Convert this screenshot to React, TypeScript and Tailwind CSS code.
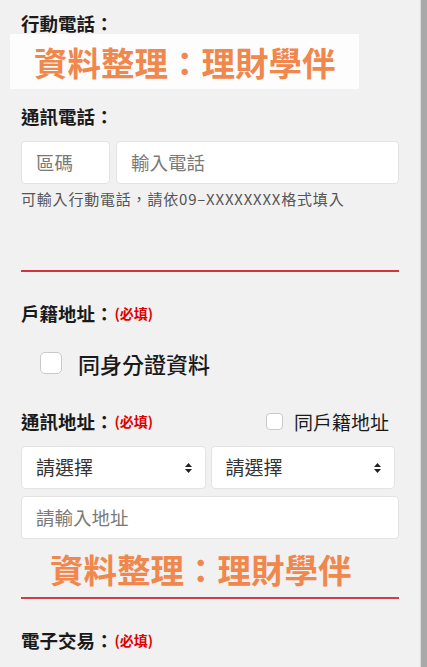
import React from "react";

const font = { fontFamily: '"Noto Sans CJK TC", "Noto Sans", sans-serif' };

function Label({ text, required }: { text: string; required?: boolean }) {
  return (
    <div className="flex items-center h-[24px] text-[18.5px] font-semibold text-[#1a1a1a] leading-none">
      <span>{text}</span>
      {required && <span className="text-[14px] font-bold text-[#e00000] ml-[1px]">(必填)</span>}
    </div>
  );
}

function Arrows() {
  return (
    <svg width="9" height="12" viewBox="0 0 9 12" className="text-[#222]">
      <path d="M4.5 1 L8 5 H1 Z" fill="currentColor" />
      <path d="M4.5 11 L8 7 H1 Z" fill="currentColor" />
    </svg>
  );
}

export default function App() {
  return (
    <div className="w-[427px] h-[667px] overflow-hidden bg-[#f1f1f1] flex" style={font}>
      <div className="flex-1 pl-[21px] pr-[21px] pt-[11px] flex flex-col">
        <Label text="行動電話：" />
        <div className="mt-[-1px] ml-[-11px] w-[349px] h-[55px] bg-[#fdfdfd] flex items-center pl-[24px]">
          <span className="text-[33.5px] font-bold text-[#f0874c] leading-none">資料整理：理財學伴</span>
        </div>
        <div className="mt-[15px]">
          <Label text="通訊電話：" />
        </div>
        <div className="mt-[13px] flex gap-[6px]">
          <div className="w-[89px] h-[43px] bg-white border border-[#e3e3e3] rounded-[4px] flex items-center pl-[14px] text-[18.5px] text-[#7a7a7a]">
            區碼
          </div>
          <div className="flex-1 h-[43px] bg-white border border-[#e3e3e3] rounded-[4px] flex items-center pl-[14px] text-[18.5px] text-[#7a7a7a]">
            輸入電話
          </div>
        </div>
        <div className="mt-[5px] text-[15px] tracking-[0.8px] text-[#555] leading-[20px] whitespace-nowrap">可輸入行動電話，請依09–XXXXXXXX格式填入</div>
        <div className="mt-[61px] h-[2px] bg-[#d8323c]" />
        <div className="mt-[29px]">
          <Label text="戶籍地址：" required />
        </div>
        <div className="mt-[23px] ml-[19px] flex items-center h-[30px]">
          <div className="w-[22px] h-[22px] bg-white border border-[#c9c9c9] rounded-[5px]" />
          <span className="ml-[16px] text-[22px] font-medium text-[#1a1a1a] leading-none">同身分證資料</span>
        </div>
        <div className="mt-[31px] flex items-center justify-between">
          <Label text="通訊地址：" required />
          <div className="flex items-center mr-[10px]">
            <div className="w-[17px] h-[17px] bg-white border border-[#c9c9c9] rounded-[4px]" />
            <span className="ml-[11px] text-[19px] text-[#1a1a1a] leading-none">同戶籍地址</span>
          </div>
        </div>
        <div className="mt-[13px] flex gap-[5px] pr-[4px]">
          {[0, 1].map((i) => (
            <div key={i} className="flex-1 h-[43px] bg-white border border-[#e3e3e3] rounded-[4px] flex items-center justify-between pl-[14px] pr-[12px] text-[19px] text-[#333]">
              <span>請選擇</span>
              <Arrows />
            </div>
          ))}
        </div>
        <div className="mt-[7px] h-[43px] bg-white border border-[#e3e3e3] rounded-[4px] flex items-center pl-[14px] text-[18.5px] text-[#7a7a7a]">
          請輸入地址
        </div>
        <div className="mt-[12px] pl-[29px] h-[36px] flex items-center">
          <span className="text-[33.5px] font-bold text-[#f0874c] leading-none">資料整理：理財學伴</span>
        </div>
        <div className="mt-[10px] h-[2px] bg-[#cf3f48]" />
        <div className="mt-[29px]">
          <Label text="電子交易：" required />
        </div>
      </div>
      <div className="w-[7px] h-full bg-[#a9a9a9] border-l border-[#dcdcdc]" />
    </div>
  );
}
